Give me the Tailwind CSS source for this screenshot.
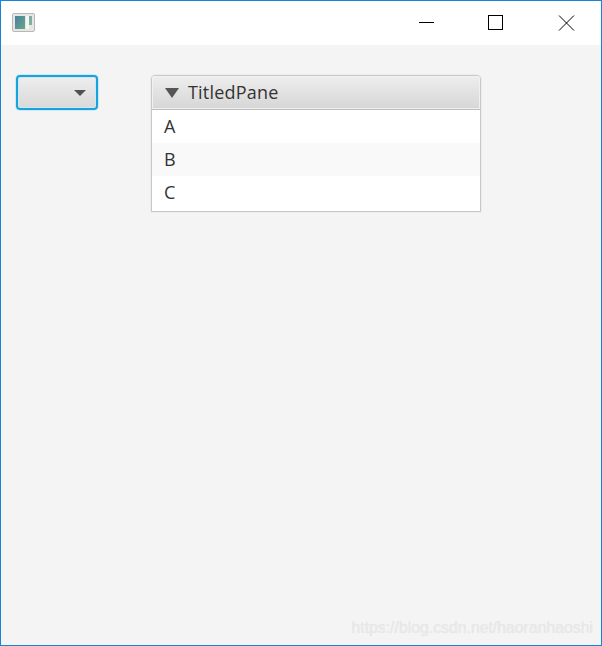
<!DOCTYPE html>
<html lang="en">
<head>
    <meta charset="UTF-8">
    <title>TitledPane</title>
    <script src="https://cdn.jsdelivr.net/npm/@tailwindcss/browser@4"></script>
</head>
<body class="overflow-hidden">
<div class="relative flex h-[646px] w-[602px] flex-col border border-[#1883d7] bg-[#f4f4f4] font-['Open_Sans',sans-serif]">
    <!-- Title bar -->
    <div class="flex h-[44px] items-center justify-between bg-white">
        <div class="ml-[11px] mt-[-1px] flex h-[19px] w-[23px] rounded-[2px] border border-[#b8b8b8] bg-[#e6e6e6] p-[2px]">
            <div class="h-full w-[10px] bg-gradient-to-br from-[#4a7f9f] to-[#6aa884]"></div>
            <div class="ml-[1px] h-full flex-1 bg-[#f6f6f6]"></div>
            <div class="h-[9px] w-[3px] bg-gradient-to-b from-[#7fa9a9] to-[#7fb595]"></div>
        </div>
        <div class="flex items-center">
            <svg class="h-[44px] w-[70px]" viewBox="0 0 70 44"><path d="M 28 21.5 H 43" stroke="#000" fill="none"/></svg>
            <svg class="h-[44px] w-[70px]" viewBox="0 0 70 44"><rect x="27.5" y="14.5" width="14" height="14" stroke="#000" fill="none"/></svg>
            <svg class="h-[44px] w-[70px]" viewBox="0 0 70 44"><path d="M 28 14.5 L 43 29.5 M 43 14.5 L 28 29.5" stroke="#000" fill="none"/></svg>
        </div>
    </div>

    <!-- Content -->
    <div class="flex flex-1 items-start pl-[15px] pt-[30px]">
        <button class="flex h-[35px] w-[82px] items-center justify-end rounded-[4px] border-2 border-[#15a5dc] bg-gradient-to-b from-[#eeeeee] to-[#d9d9d9] pr-[10px] shadow-[0_0_0_1px_#d5e8f0,inset_0_0_0_1px_#d3e6ee]">
            <svg class="h-[6px] w-[12px]" viewBox="0 0 12 6"><path d="M 0 0 H 12 L 6 6 Z" fill="#505050"/></svg>
        </button>
        <div class="ml-[53px] w-[330px] rounded-t-[4px] border border-[#c8c8c8] bg-white text-[18px] leading-[33px] text-[#333333] shadow-[0_0_0_1px_#ececec]">
            <div class="flex h-[34px] items-center rounded-t-[3px] border-b border-[#bcbcbc] bg-gradient-to-b from-[#eeeeee] to-[#d6d6d6] pl-[13px] shadow-[inset_0_0_0_1px_#f0f0f0]">
                <svg class="h-[10px] w-[14px]" viewBox="0 0 14 10"><path d="M 0 0 H 14 L 7 10 Z" fill="#555555"/></svg>
                <span class="ml-[9px] tracking-[0.2px]">TitledPane</span>
            </div>
            <div class="pl-[12px]">A</div>
            <div class="bg-[#f9f9f9] pl-[12px]">B</div>
            <div class="h-[35px] pl-[12px]">C</div>
        </div>
    </div>

    <!-- Watermark -->
    <span class="absolute bottom-[7px] right-[8px] font-['Liberation_Sans',sans-serif] text-[15.8px] leading-[20px] text-[#e8e8e8] [text-shadow:0_0_1px_#e4e4e4]">https://blog.csdn.net/haoranhaoshi</span>
</div>
</body>
</html>
